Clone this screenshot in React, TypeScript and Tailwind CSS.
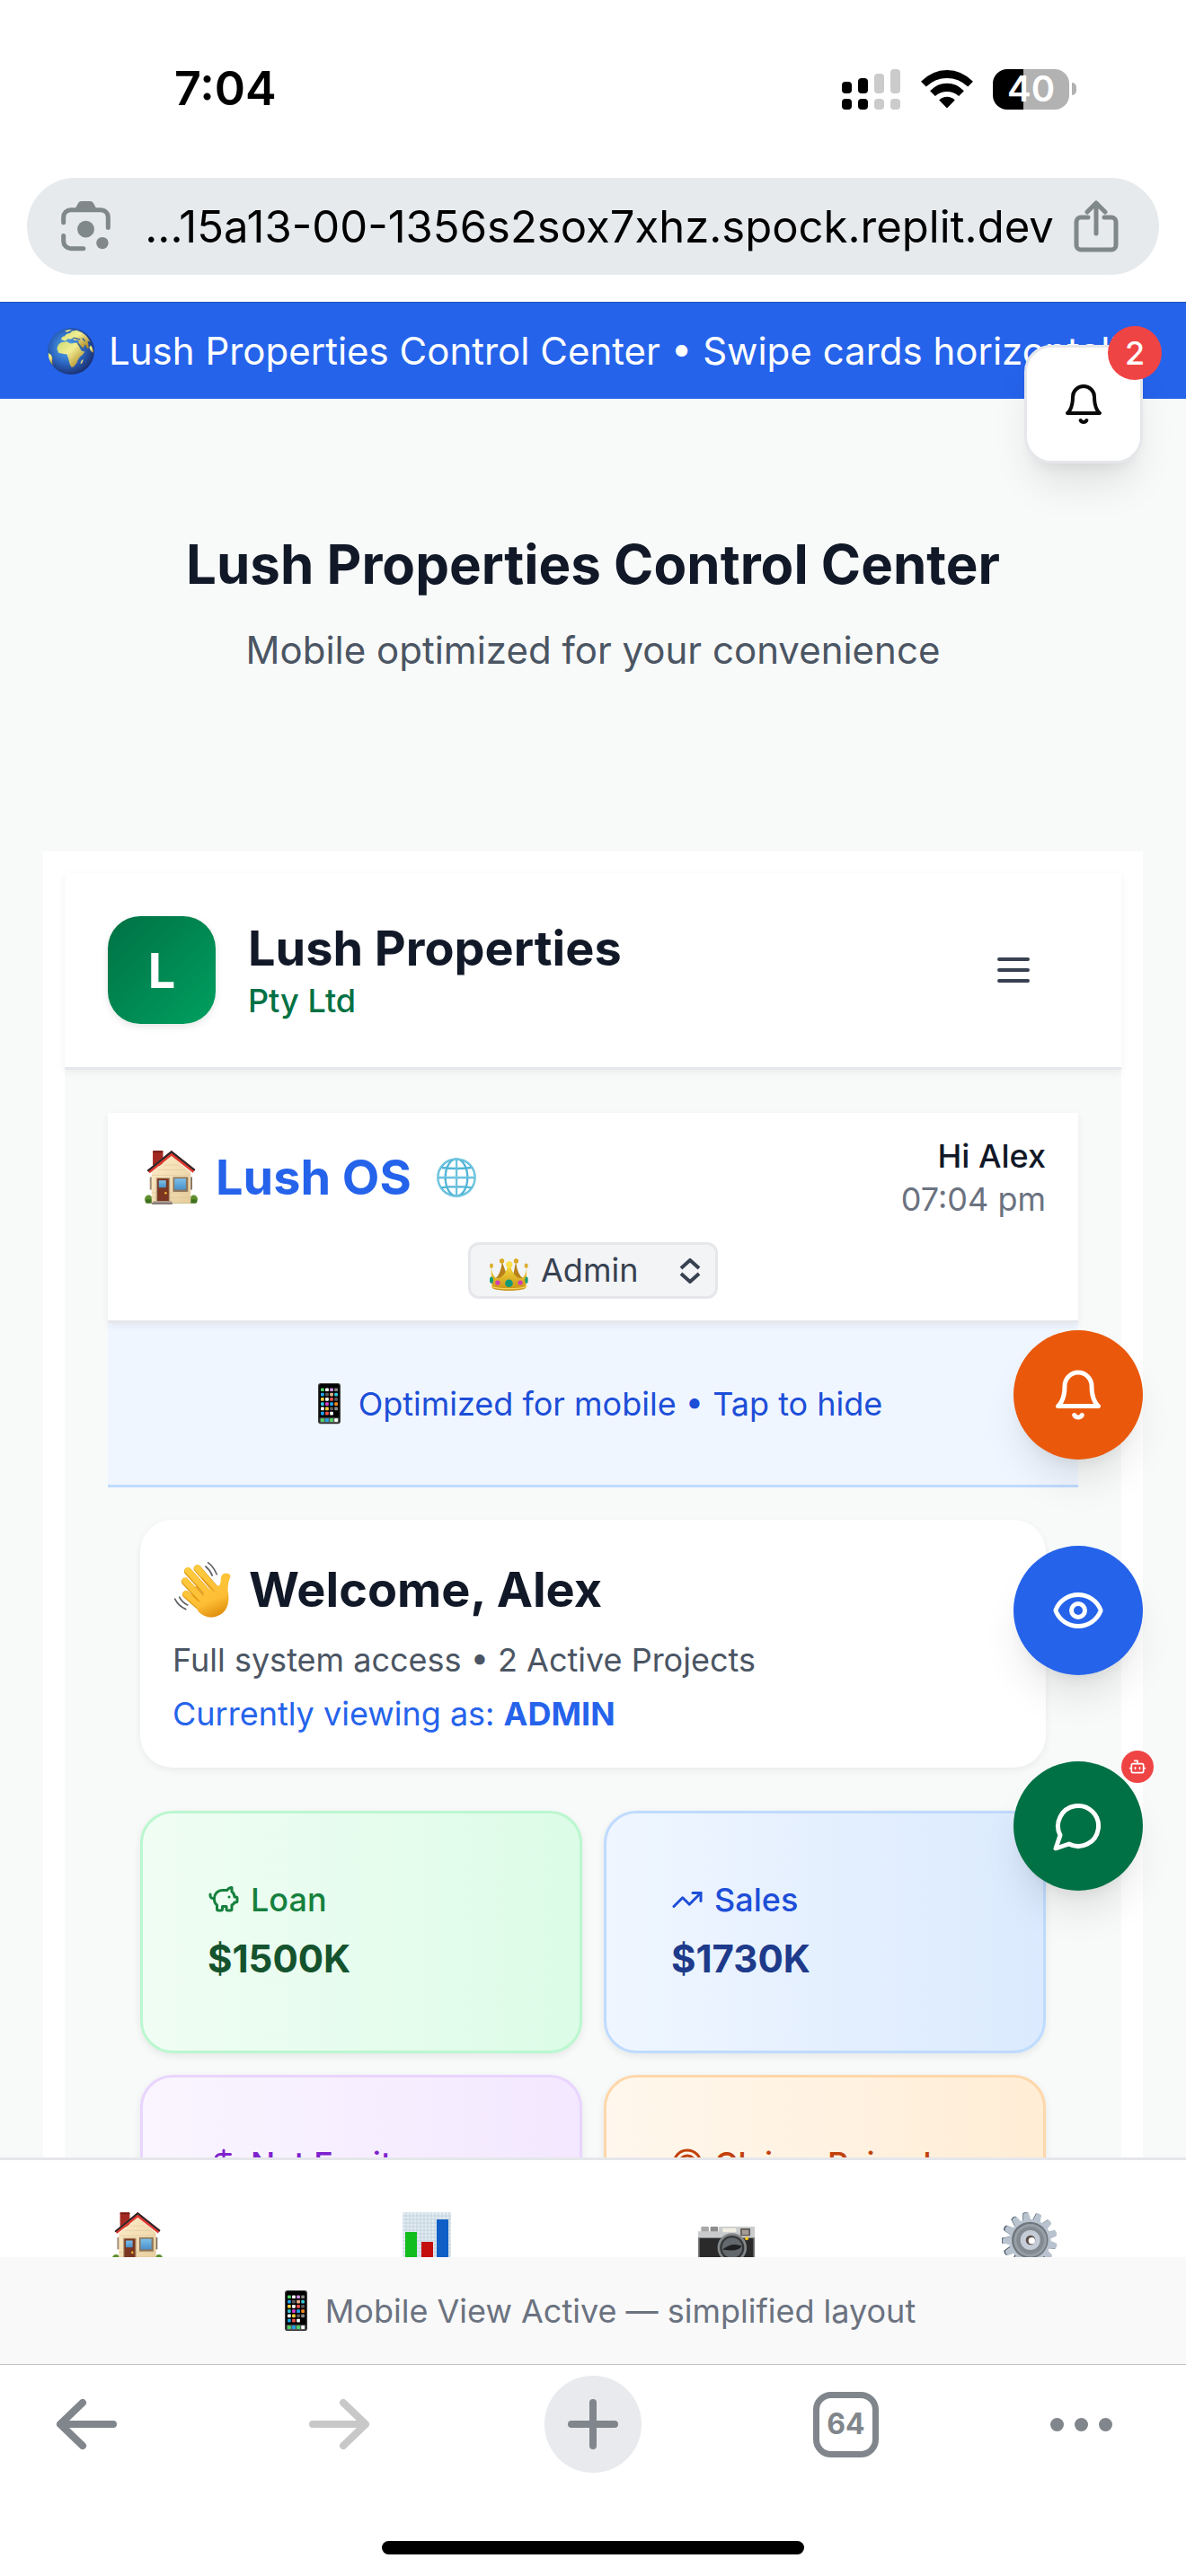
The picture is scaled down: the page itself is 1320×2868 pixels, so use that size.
import type { ReactNode } from "react";
import { Bot, DollarSign, Eye, PiggyBank, Target, TrendingUp } from "lucide-react";

type IconProps = { className?: string };

/* ---------- Line icons ---------- */

function BellIcon({ className }: IconProps) {
  return (
    <svg viewBox="0 0 24 24" fill="none" stroke="currentColor" strokeWidth="2" strokeLinecap="round" strokeLinejoin="round" className={className} aria-hidden="true">
      <path d="M6 8a6 6 0 0 1 12 0c0 7 3 9 3 9H3s3-2 3-9" />
      <path d="M10.3 21a1.94 1.94 0 0 0 3.4 0" />
    </svg>
  );
}

function ChatIcon({ className }: IconProps) {
  return (
    <svg viewBox="0 0 24 24" fill="none" stroke="currentColor" strokeWidth="2" strokeLinecap="round" strokeLinejoin="round" className={className} aria-hidden="true">
      <path d="M7.9 20A9 9 0 1 0 4 16.1L2 22Z" />
    </svg>
  );
}

function MenuIcon({ className }: IconProps) {
  return (
    <svg viewBox="0 0 24 24" fill="none" stroke="currentColor" strokeWidth="2" strokeLinecap="round" className={className} aria-hidden="true">
      <path d="M4 6h16M4 12h16M4 18h16" />
    </svg>
  );
}

function LensIcon({ className }: IconProps) {
  return (
    <svg viewBox="0 0 164 165" fill="none" className={className} aria-hidden="true">
      <g stroke="currentColor" strokeWidth="15" strokeLinecap="round">
        <path d="M8 71V53a24 24 0 0 1 24-24h100a24 24 0 0 1 24 24v35" />
        <path d="M8 115v18a24 24 0 0 0 24 24h42" />
      </g>
      <path d="M46 26 57 6q3-6 10-6h30q7 0 10 6l11 20Z" fill="currentColor" />
      <circle cx="82" cy="93" r="28" fill="currentColor" />
      <circle cx="137" cy="139" r="20" fill="currentColor" />
    </svg>
  );
}

function ShareIcon({ className }: IconProps) {
  return (
    <svg viewBox="0 0 50 58" fill="none" stroke="currentColor" strokeWidth="5" strokeLinecap="round" strokeLinejoin="round" className={className} aria-hidden="true">
      <path d="M16 19H8a5 5 0 0 0-5 5v26a5 5 0 0 0 5 5h34a5 5 0 0 0 5-5V24a5 5 0 0 0-5-5h-8" />
      <path d="M25 37V4M15 13 25 3l10 10" />
    </svg>
  );
}

function ArrowIcon({ className }: IconProps) {
  return (
    <svg viewBox="0 0 68 56" fill="none" stroke="currentColor" strokeWidth="8" strokeLinecap="round" strokeLinejoin="round" className={className} aria-hidden="true">
      <path d="M64 28H5M30 4 5 28l25 24" />
    </svg>
  );
}

function SignalIcon({ className }: IconProps) {
  return (
    <svg viewBox="0 0 66 45" className={className} aria-hidden="true">
      <g fill="#000">
        <rect x="0" y="14" width="11" height="13" rx="4" />
        <rect x="0" y="33" width="11" height="12" rx="4" />
        <rect x="18" y="10" width="11" height="17" rx="4" />
        <rect x="18" y="33" width="11" height="12" rx="4" />
      </g>
      <g fill="#cbcbcb">
        <rect x="36" y="5" width="11" height="22" rx="4" />
        <rect x="36" y="33" width="11" height="12" rx="4" />
        <rect x="54" y="0" width="11" height="27" rx="4" />
        <rect x="54" y="33" width="11" height="12" rx="4" />
      </g>
    </svg>
  );
}

function WifiIcon({ className }: IconProps) {
  return (
    <svg viewBox="0 0 172 126" className={className} aria-hidden="true">
      <path d="M0 38Q38 0 86 0t86 38l-17 17Q124 27 86 27T17 55Z" />
      <path d="M30 69q24-25 56-25t56 25l-17 17Q108 71 86 71T47 86Z" />
      <path d="M60 99q11-11 26-11t26 11l-26 27Z" />
    </svg>
  );
}

/* ---------- Pictograms ---------- */

function House({ className }: IconProps) {
  return (
    <svg viewBox="0 0 176 180" className={className} role="img" aria-label="House">
      <defs>
        <linearGradient id="houseWall" x1="0" y1="0" x2="1" y2="1">
          <stop offset="0" stopColor="#ffeecb" />
          <stop offset="1" stopColor="#e6cc9c" />
        </linearGradient>
        <linearGradient id="housePane" x1="0" y1="0" x2="0" y2="1">
          <stop offset="0" stopColor="#7cc0ea" />
          <stop offset="1" stopColor="#4a90c9" />
        </linearGradient>
      </defs>
      <rect x="27" y="1" width="34" height="50" rx="3" fill="#a32a22" />
      <rect x="27" y="1" width="34" height="6" rx="3" fill="#7d1d17" />
      <rect x="17" y="88" width="9" height="42" fill="#a08c77" />
      <rect x="149" y="88" width="9" height="42" fill="#7d6a5a" />
      <circle cx="13" cy="161" r="13" fill="#5d8f2c" />
      <circle cx="163" cy="161" r="13" fill="#5d8f2c" />
      <rect x="2" y="162" width="172" height="13" rx="6" fill="#40701f" />
      <path d="M23 175V72L89 18l64 54v103Z" fill="url(#houseWall)" />
      <g stroke="#d9c095" strokeWidth="1.5">
        <path d="M62 48h52M42 64h92M24 82h128M24 140h128M24 156h128" />
      </g>
      <path d="M89 0 168 63l-8 11L89 18 17 75 8 66Z" fill="#e0392e" />
      <path d="M89 0 168 63l-3 5L89 8 12 70l-4-4Z" fill="#26292d" />
      <rect x="38" y="90" width="46" height="78" fill="#b79c79" />
      <rect x="42" y="93" width="38" height="75" fill="#7a3620" />
      <rect x="47" y="99" width="24" height="24" fill="url(#housePane)" />
      <circle cx="70" cy="141" r="4" fill="#f2b632" />
      <rect x="94" y="88" width="50" height="49" fill="#8d7458" />
      <rect x="99" y="93" width="38" height="37" fill="url(#housePane)" />
      <rect x="28" y="168" width="62" height="6" fill="#a59a92" />
      <rect x="24" y="173" width="68" height="7" fill="#877c76" />
    </svg>
  );
}

function Earth({ className }: IconProps) {
  return (
    <svg viewBox="0 0 154 154" className={className} role="img" aria-label="Globe">
      <defs>
        <radialGradient id="earthSea" cx="0.42" cy="0.42" r="0.62">
          <stop offset="0" stopColor="#5cb0e8" />
          <stop offset="0.55" stopColor="#2c67c4" />
          <stop offset="1" stopColor="#1a2c6c" />
        </radialGradient>
        <linearGradient id="earthLand" x1="0.1" y1="0.1" x2="0.9" y2="0.9">
          <stop offset="0" stopColor="#d5e07a" />
          <stop offset="0.4" stopColor="#f1ee94" />
          <stop offset="1" stopColor="#b08a26" />
        </linearGradient>
      </defs>
      <circle cx="77" cy="77" r="77" fill="url(#earthSea)" />
      <g fill="url(#earthLand)">
        <path d="M31 69q2-15 14-21l18-3 12 7 22-3 8 16 8 12 9-1q0 9-15 19l-8 12-2 8-11 13-7 2-6-10-5-20-4-13-15-2-13-3Z" />
        <path d="M45 39q0-10 10-11l8-8 10-2 8-8 15-2q32 10 44 38l-8-2 4 22-6 2-6-14-7 13-13-3-8-13 8-4-6-7-10 2-5-9-7 5-9-2-8 7Z" />
        <path d="M142 58q9 10 9 25l-8-6-6-12Z" />
        <path d="M2 82l9 7 5 10-1 11q2 10 1 13Q2 105 2 82Z" />
        <path d="M118 104l-4 12-6 3 3-10Z" />
        <path d="M80 6q-14-2-24 5l10 3Z" />
      </g>
      <path d="m100 51 20 25M86 33l20 5M116 35l6 8" stroke="#315f9e" strokeWidth="4" strokeLinecap="round" />
    </svg>
  );
}

function Meridians({ className }: IconProps) {
  return (
    <svg viewBox="0 0 132 132" className={className} role="img" aria-label="Language">
      <g fill="none" stroke="#52b5d6" strokeWidth="7">
        <circle cx="66" cy="66" r="62" />
        <ellipse cx="66" cy="66" rx="37" ry="62" />
        <path d="M66 4v124M4 66h124M17 33q49 6 98 0M14 100q52-7 104 0" />
      </g>
      <g fill="none" stroke="#a3e2f3" strokeWidth="2">
        <circle cx="66" cy="66" r="63" />
        <path d="M65 6v120M6 65h120" />
      </g>
    </svg>
  );
}

function Crown({ className }: IconProps) {
  return (
    <svg viewBox="0 0 130 108" className={className} role="img" aria-label="Crown">
      <defs>
        <linearGradient id="crownGold" x1="0" y1="0" x2="0" y2="1">
          <stop offset="0" stopColor="#f7dc3f" />
          <stop offset="1" stopColor="#c78f14" />
        </linearGradient>
      </defs>
      <path d="M18 68q18-10 24-56l18 50 8 6 10-6L88 12q6 46 26 56Z" fill="#b8811a" />
      <g fill="#d9a722">
        <circle cx="41" cy="9" r="8" />
        <circle cx="89" cy="9" r="8" />
      </g>
      <path d="M4 28q6 36 22 40 24-2 37-46h5q13 44 37 46 16-4 20-40l-3 72q-14 9-57 9t-57-9Z" fill="url(#crownGold)" />
      <circle cx="66" cy="21" r="11" fill="#fbe04a" />
      <g fill="#dcae2c">
        <ellipse cx="6" cy="25" rx="6" ry="8" />
        <ellipse cx="123" cy="25" rx="6" ry="8" />
      </g>
      <path d="M5 94q18 8 60 8t60-8" fill="none" stroke="#f3d255" strokeWidth="4" />
      <circle cx="65" cy="84" r="13" fill="#109b76" />
      <circle cx="27" cy="82" r="8" fill="#d13fb4" />
      <circle cx="103" cy="82" r="8" fill="#d13fb4" />
      <ellipse cx="6" cy="73" rx="6" ry="11" fill="#109b76" />
      <ellipse cx="124" cy="73" rx="5" ry="11" fill="#109b76" />
    </svg>
  );
}

const appRows = [
  ["#4fd964", "#ffffff", "#d490e8", "#8a8a8a"],
  ["#1ea6f0", "#5b5b5b", "#e8b28a", "#35c5d9"],
  ["#f3cf3b", "#ffffff", "#f0524a", "#5b5b5b"],
  ["#35c5d9", "#d940d0", "#1ea6f0", "#f08a1e"],
  ["#ffffff", "#f3cf3b", "#5b5b5b", "#8a8a8a"],
  ["#1ea6f0", "#f0524a", "#ffffff", "#000000"],
];

function Phone({ className }: IconProps) {
  return (
    <svg viewBox="0 0 74 134" className={className} role="img" aria-label="Phone">
      <rect width="74" height="134" rx="9" fill="#3b3b3d" />
      <rect x="4" y="3" width="66" height="128" rx="6" fill="#000" />
      {appRows.map((row, r) =>
        row.map((fill, c) => <rect key={`${r}-${c}`} x={9 + c * 15} y={16 + r * 15.6} width="11" height="11" rx="2" fill={fill} />),
      )}
      <rect x="5" y="113" width="64" height="17" rx="4" fill="#565a5a" />
      {["#4fd964", "#1ea6f0", "#4fd964", "#ffffff"].map((fill, c) => (
        <rect key={c} x={9 + c * 15} y="116" width="11" height="11" rx="2" fill={fill} />
      ))}
    </svg>
  );
}

function Wave({ className }: IconProps) {
  return (
    <svg viewBox="0 0 188 184" className={className} role="img" aria-label="Waving hand">
      <defs>
        <linearGradient id="handSkin" gradientUnits="userSpaceOnUse" x1="60" y1="20" x2="130" y2="184">
          <stop offset="0" stopColor="#ffcb3e" />
          <stop offset="0.7" stopColor="#fdbe35" />
          <stop offset="1" stopColor="#e08f0c" />
        </linearGradient>
      </defs>
      <g stroke="#dd9410" strokeWidth="25" strokeLinecap="round">
        <path d="m77 22 60 70M45 31l66 73M36 65l62 66M39 108l50 44" />
      </g>
      <g stroke="url(#handSkin)" strokeWidth="21" strokeLinecap="round">
        <path d="m77 21 60 70M45 29l66 73M36 63l62 66M39 106l50 44" />
      </g>
      <path d="M72 142q20 0 26-38l38-26q17 6 18-12-1-28 16-29 19 0 16 14-10 20-8 45 8 40-10 66-15 20-45 22-24 0-44-20Z" fill="url(#handSkin)" />
      <path d="m93 54 38 42M72 82l24 28M62 112l18 17" stroke="#e39d18" strokeWidth="4" strokeLinecap="round" />
      <g fill="none" stroke="#626568" strokeWidth="5" strokeLinecap="round">
        <path d="M112 2q18 14 29 39M104 15q14 11 22 30M2 123q12 24 36 34M17 117q11 19 27 26" />
      </g>
    </svg>
  );
}

function BarChart({ className }: IconProps) {
  return (
    <svg viewBox="0 0 54 60" className={className} aria-hidden="true">
      <rect width="54" height="60" fill="#e2ecf3" />
      <g stroke="#c4d3dd" strokeWidth="1">
        <path d="M0 4h54M0 8h54M0 12h54M0 16h54M0 20h54M0 24h54M0 28h54M0 32h54M0 36h54M0 40h54M0 44h54M0 48h54M4 0v60M8 0v60M12 0v60M16 0v60M20 0v60M24 0v60M28 0v60M32 0v60M36 0v60M40 0v60M44 0v60M48 0v60M52 0v60" />
      </g>
      <rect x="3" y="22" width="13" height="38" fill="#12bd1d" />
      <rect x="21" y="33" width="13" height="27" fill="#c40d0d" />
      <rect x="38" y="8" width="13" height="52" fill="#0f5fc6" />
    </svg>
  );
}

function Camera({ className }: IconProps) {
  return (
    <svg viewBox="0 0 190 150" className={className} aria-hidden="true">
      <rect x="10" y="0" width="26" height="18" rx="3" fill="#a8a8a8" />
      <rect x="41" y="0" width="26" height="18" rx="3" fill="#8d8d8d" />
      <path d="M0 16h70V0h120v150H0Z" fill="#c9cbcc" />
      <rect y="38" width="190" height="112" fill="#2a2a2b" />
      <rect y="38" width="5" height="112" fill="#77797a" />
      <rect x="185" y="38" width="5" height="112" fill="#77797a" />
      <rect x="82" y="5" width="46" height="14" rx="3" fill="#f2efe2" />
      <rect x="142" y="6" width="33" height="25" rx="2" fill="#5c5753" />
      <rect x="147" y="11" width="23" height="16" fill="#a59c96" />
      <circle cx="114" cy="71" r="49" fill="#85888a" />
      <circle cx="114" cy="71" r="41" fill="#343638" />
      <circle cx="114" cy="71" r="34" fill="#63686c" />
      <path d="M82 77q30-26 64-12-10 22-64 12Z" fill="#1e2022" />
      <circle cx="163" cy="40" r="6" fill="#f5c51c" />
    </svg>
  );
}

const teeth = Array.from({ length: 13 }, (_, i) => 20 + (i * 360) / 13);

function Gear({ className }: IconProps) {
  return (
    <svg viewBox="0 0 186 186" className={className} aria-hidden="true">
      {teeth.map((angle) => (
        <path key={`b${angle}`} d="M78 30 82 2q9-5 18 0l4 28Z" fill="#4d5e6b" transform={`rotate(${angle} 91 93)`} />
      ))}
      {teeth.map((angle) => (
        <path key={angle} d="M80 30 84 4q9-6 18 0l4 26Z" fill="#b9c3cf" transform={`rotate(${angle} 94 93)`} />
      ))}
      <circle cx="94" cy="93" r="70" fill="#b9c3cf" />
      <circle cx="94" cy="93" r="61" fill="#6f767d" />
      <circle cx="95" cy="94" r="55" fill="#979fa6" />
      <circle cx="95" cy="94" r="46" fill="#838a91" />
      <circle cx="95" cy="93" r="33" fill="#c4ccd7" />
      <circle cx="96" cy="93" r="16" fill="#5c4c46" />
      <circle cx="100" cy="95" r="11" fill="#fff" />
    </svg>
  );
}

/* ---------- Sections ---------- */

function StatusBar() {
  return (
    <div className="flex h-[198px] items-center justify-between pr-[122px] pl-[194px]">
      <span className="text-[52px] leading-none font-semibold text-black">7:04</span>
      <div className="flex items-center">
        <SignalIcon className="w-[66px]" />
        <WifiIcon className="ml-[22px] w-[58px]" />
        <span className="ml-[22px] flex h-[45px] w-[85px] items-center justify-center rounded-2xl bg-linear-to-r from-black from-40% to-[#b2b2b2] to-40% text-[40px] leading-none font-semibold text-white">
          40
        </span>
        <span className="ml-[3px] h-[14px] w-[5px] rounded-r-full bg-[#b2b2b2]" />
      </div>
    </div>
  );
}

function AddressBar() {
  return (
    <div className="mx-[30px] mb-[30px] flex h-[108px] items-center rounded-full bg-[#e6eaed] pr-[45px] pl-[38px] text-[#80888a]">
      <button type="button" aria-label="Search with camera" className="shrink-0">
        <LensIcon className="w-[55px]" />
      </button>
      <a href="#page" className="min-w-0 flex-1 pl-4 text-center text-[49px] leading-none whitespace-nowrap text-black">
        ...15a13-00-1356s2sox7xhz.spock.replit.dev
      </a>
      <button type="button" aria-label="Share" className="shrink-0">
        <ShareIcon className="w-[50px]" />
      </button>
    </div>
  );
}

type StatProps = { icon: ReactNode; label: string; value: string; card: string; labelColor: string; valueColor: string };

function StatCard({ icon, label, value, card, labelColor, valueColor }: StatProps) {
  return (
    <article className={`rounded-[36px] border-3 bg-linear-to-r p-[72px] shadow-[0_3px_9px_rgba(0,0,0,0.08)] ${card}`}>
      <h3 className={`flex items-center gap-3 text-[36px] leading-[48px] font-medium whitespace-nowrap [font-optical-sizing:auto] ${labelColor}`}>
        {icon}
        {label}
      </h3>
      <p className={`mt-3 text-[42px] leading-[60px] font-bold ${valueColor}`}>{value}</p>
    </article>
  );
}

const fab =
  "relative flex size-36 items-center justify-center rounded-full text-white shadow-[0_30px_45px_-9px_rgba(0,0,0,0.1),0_12px_18px_-12px_rgba(0,0,0,0.1)]";

export default function App() {
  return (
    <div className="flex h-screen flex-col overflow-hidden bg-white font-['Inter',sans-serif] [font-optical-sizing:none]">
      <header className="shrink-0">
        <StatusBar />
        <AddressBar />
      </header>

      <div id="page" className="relative min-h-0 flex-1 overflow-hidden bg-[#f8faf9]">
        <div className="flex h-[108px] items-center gap-4 overflow-hidden border-t border-[#1d54b8] bg-[#2563eb] px-[53px] text-[42px] whitespace-nowrap text-white">
          <Earth className="w-[52px] shrink-0" />
          Lush Properties Control Center • Swipe cards horizontally
        </div>

        <div className="px-12 pt-[142px] text-center">
          <h1 className="text-[60px] leading-[84px] font-bold text-[#111827]">Lush Properties Control Center</h1>
          <p className="mt-6 text-[42px] leading-[60px] text-[#4b5563]">Mobile optimized for your convenience</p>
        </div>

        <main className="mx-12 mt-[194px] bg-white p-6">
          <div className="bg-[#f8faf9]">
            <div className="relative flex items-center border-b-3 border-[#e5e7eb] bg-white p-12 shadow-[0_3px_9px_rgba(0,0,0,0.06)]">
              <div className="flex size-[120px] items-center justify-center rounded-[36px] bg-linear-to-br from-[#007144] to-[#00a060] text-[54px] font-bold text-white shadow-[0_3px_9px_rgba(0,0,0,0.1)]">
                L
              </div>
              <div className="ml-9">
                <p className="text-[54px] leading-[68px] font-bold text-[#111827]">Lush Properties</p>
                <p className="text-[36px] leading-[48px] font-medium text-[#007144]">Pty Ltd</p>
              </div>
              <button type="button" aria-label="Open menu" className="ml-auto flex h-[108px] w-36 items-center justify-center text-[#374151]">
                <MenuIcon className="size-12" />
              </button>
            </div>

            <div className="px-12 pt-12">
              <div className="relative border-b-3 border-[#e5e7eb] bg-white px-9 py-6 shadow-[0_3px_9px_rgba(0,0,0,0.06)]">
                <div className="flex items-center justify-between">
                  <div className="flex items-center">
                    <House className="ml-[5px] w-[59px]" />
                    <h2 className="ml-5 text-[54px] leading-[84px] font-bold text-[#2563eb]">Lush OS</h2>
                    <button type="button" aria-label="Change language" className="ml-7">
                      <Meridians className="w-11" />
                    </button>
                  </div>
                  <div className="text-right text-[36px] leading-[48px]">
                    <p className="font-medium text-[#111827]">Hi Alex</p>
                    <p className="text-[#6b7280]">07:04 pm</p>
                  </div>
                </div>
                <div className="mt-6 flex justify-center">
                  <div className="relative">
                    <select
                      aria-label="Role"
                      className="block h-[63px] w-[278px] appearance-none rounded-xl border-3 border-[#e5e7eb] bg-[#f3f4f6] pl-[78px] text-[36px] leading-[57px] text-[#374151]"
                    >
                      <option>Admin</option>
                    </select>
                    <Crown className="pointer-events-none absolute top-[18px] left-6 w-[43px]" />
                    <svg viewBox="0 0 24 28" fill="none" stroke="currentColor" strokeWidth="4" className="pointer-events-none absolute top-[18px] right-[19px] w-6 text-[#374151]" aria-hidden="true">
                      <path d="m2 11 10-9 10 9M2 17l10 9 10-9" />
                    </svg>
                  </div>
                </div>
              </div>

              <button
                type="button"
                className="flex h-[183px] w-full items-center justify-center gap-5 border-b-3 border-[#bfdbfe] bg-[#eff6ff] pl-4 text-[36px] leading-[48px] text-[#1d4ed8]"
              >
                <Phone className="w-[25px]" />
                Optimized for mobile • Tap to hide
              </button>

              <div className="p-9">
                <section className="rounded-[36px] bg-white p-9 shadow-[0_3px_9px_rgba(0,0,0,0.06)]">
                  <h2 className="flex items-center gap-5 text-[54px] leading-[84px] font-bold text-[#111827]">
                    <Wave className="ml-[2px] w-[63px]" />
                    Welcome, Alex
                  </h2>
                  <p className="mt-3 text-[36px] leading-[48px] text-[#4b5563]">Full system access • 2 Active Projects</p>
                  <p className="mt-3 text-[36px] leading-[48px] text-[#2563eb]">
                    Currently viewing as: <strong className="font-bold">ADMIN</strong>
                  </p>
                </section>

                <section aria-label="Figures" className="mt-12 grid grid-cols-2 gap-6">
                  <StatCard
                    icon={<PiggyBank className="size-9" />}
                    label="Loan"
                    value="$1500K"
                    card="border-[#bbf7d0] from-[#f0fdf4] to-[#dcfce7]"
                    labelColor="text-[#15803d]"
                    valueColor="text-[#14532d]"
                  />
                  <StatCard
                    icon={<TrendingUp className="size-9" />}
                    label="Sales"
                    value="$1730K"
                    card="border-[#bfdbfe] from-[#eff6ff] to-[#dbeafe]"
                    labelColor="text-[#1d4ed8]"
                    valueColor="text-[#1e3a8a]"
                  />
                  <StatCard
                    icon={<DollarSign className="size-9" />}
                    label="Net Equity"
                    value="$230K"
                    card="border-[#e9d5ff] from-[#faf5ff] to-[#f3e8ff]"
                    labelColor="text-[#7e22ce]"
                    valueColor="text-[#581c87]"
                  />
                  <StatCard
                    icon={<Target className="size-9" />}
                    label="Claims Raised"
                    value="$0K"
                    card="border-[#fed7aa] from-[#fff7ed] to-[#ffedd5]"
                    labelColor="text-[#c2410c]"
                    valueColor="text-[#7c2d12]"
                  />
                </section>
              </div>
            </div>
          </div>
        </main>

        <button
          type="button"
          aria-label="Notifications, 2 unread"
          className="absolute top-12 right-12 flex size-[132px] items-center justify-center rounded-[30px] border-3 border-[#e5e7eb] bg-white text-[#0a0a0a] shadow-[0_30px_45px_-9px_rgba(0,0,0,0.1),0_12px_18px_-12px_rgba(0,0,0,0.1)]"
        >
          <BellIcon className="size-12" />
          <span className="absolute -top-6 -right-6 flex size-15 items-center justify-center rounded-full bg-[#ef4444] text-[36px] leading-none font-medium text-white">2</span>
        </button>

        <div className="absolute right-12 bottom-[297px] flex flex-col gap-24">
          <button type="button" aria-label="Alerts" className={`${fab} bg-[#ea580c]`}>
            <BellIcon className="size-15" />
          </button>
          <button type="button" aria-label="Preview" className={`${fab} bg-[#2563eb]`}>
            <Eye className="size-15" />
          </button>
          <button type="button" aria-label="Chat" className={`${fab} bg-[#007144]`}>
            <ChatIcon className="size-15" />
            <span className="absolute -top-3 -right-3 flex size-9 items-center justify-center rounded-full bg-[#ef4444]">
              <Bot className="size-5" />
            </span>
          </button>
        </div>
      </div>

      <nav aria-label="Sections" className="grid h-[111px] shrink-0 grid-cols-[306fr_338fr_328fr_348fr] items-start justify-items-center overflow-hidden border-t-3 border-[#e5e7eb] bg-white pt-[58px]">
        <button type="button" aria-label="Home">
          <House className="w-[56px]" />
        </button>
        <button type="button" aria-label="Dashboard">
          <BarChart className="w-[54px]" />
        </button>
        <button type="button" aria-label="Photos" className="pt-4">
          <Camera className="w-[63px]" />
        </button>
        <button type="button" aria-label="Settings">
          <Gear className="w-[62px]" />
        </button>
      </nav>

      <footer className="shrink-0">
        <p className="flex h-[120px] items-center justify-center gap-5 border-b border-[#c0c2c4] bg-[#f9f9f9] pl-4 text-[36px] text-[#6b7280]">
          <Phone className="w-[25px]" />
          Mobile View Active — simplified layout
        </p>
        <div className="grid h-[132px] grid-cols-[191fr_373fr_192fr_371fr_153fr] items-center pr-10 text-[#80868b]">
          <button type="button" aria-label="Back" className="flex justify-center">
            <ArrowIcon className="w-[68px]" />
          </button>
          <button type="button" aria-label="Forward" className="flex justify-center text-[#c8c8c8]">
            <ArrowIcon className="w-[68px] rotate-180" />
          </button>
          <button type="button" aria-label="New tab" className="flex size-[108px] items-center justify-center justify-self-center rounded-full bg-[#e8eaed]">
            <svg viewBox="0 0 56 56" stroke="currentColor" strokeWidth="8" strokeLinecap="round" className="w-14" aria-hidden="true">
              <path d="M28 4v48M4 28h48" />
            </svg>
          </button>
          <button type="button" aria-label="64 open tabs" className="flex size-[73px] items-center justify-center justify-self-center rounded-[20px] border-[7px] border-current text-[32px] leading-none font-bold">
            64
          </button>
          <button type="button" aria-label="More" className="flex justify-center gap-3">
            <span className="size-[15px] rounded-full bg-current" />
            <span className="size-[15px] rounded-full bg-current" />
            <span className="size-[15px] rounded-full bg-current" />
          </button>
        </div>
        <div className="mx-auto mt-16 mb-6 h-[15px] w-[470px] rounded-full bg-black" />
      </footer>
    </div>
  );
}
